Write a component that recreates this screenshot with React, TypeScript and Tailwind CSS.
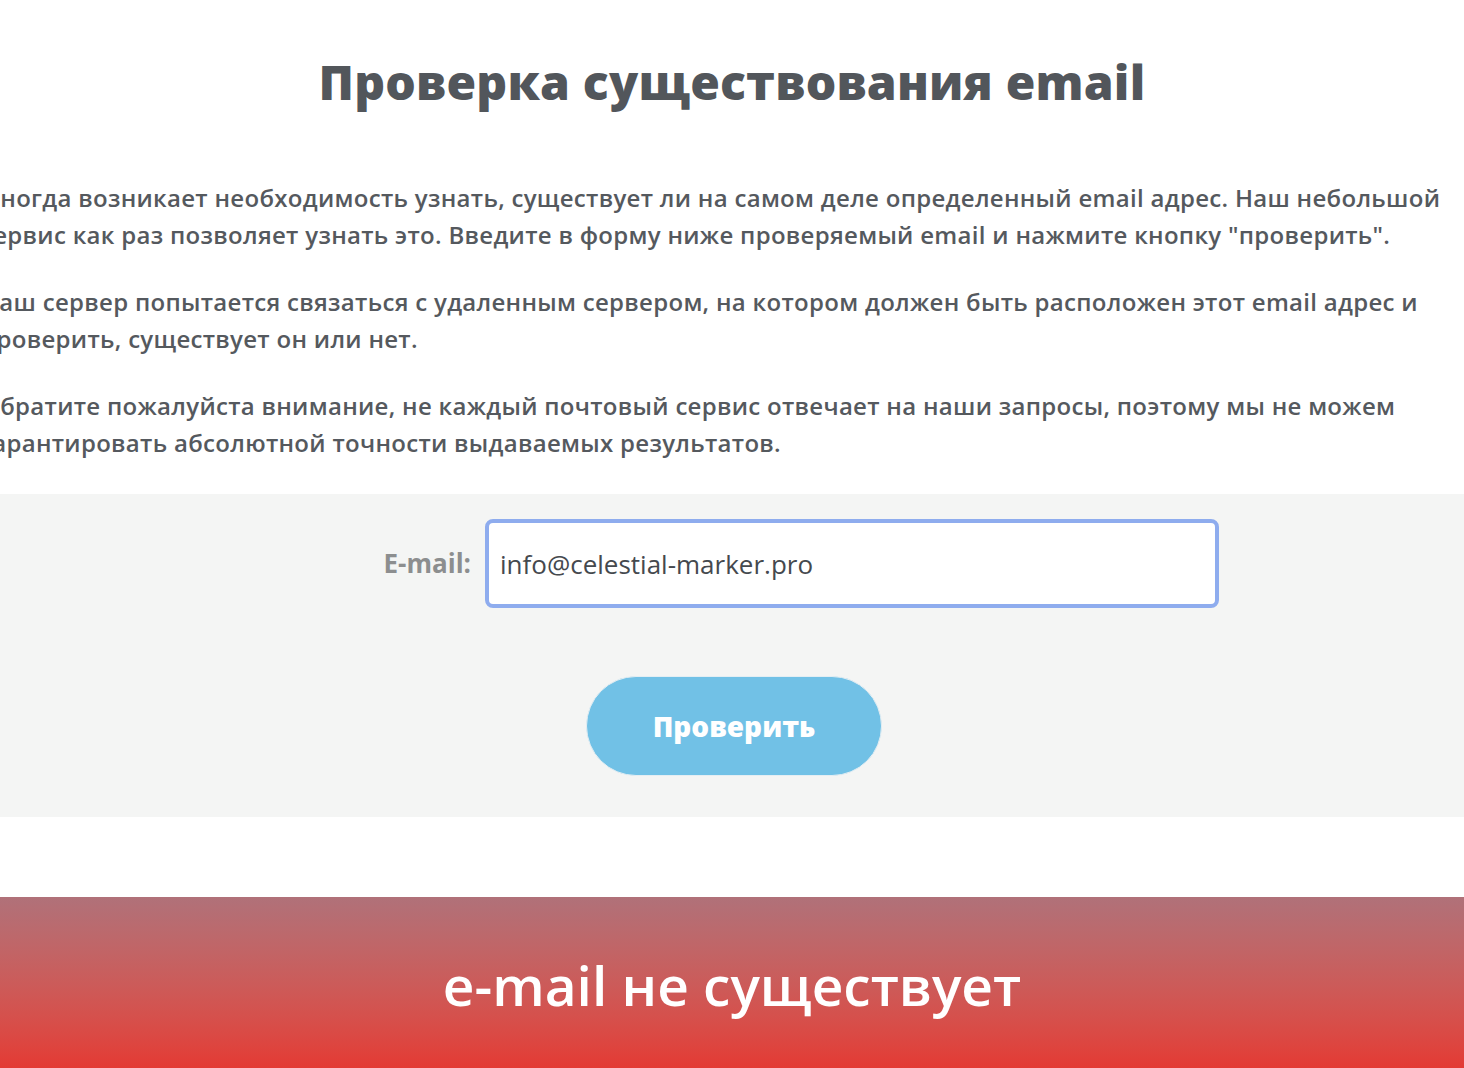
import { useState } from 'react';

export default function App() {
  const [email, setEmail] = useState('info@celestial-marker.pro');

  return (
    <div className="w-full min-h-[1068px] overflow-hidden bg-white font-['Open_Sans',sans-serif]">
      <h1 className="pt-[51px] text-center text-[48px] leading-[62px] font-extrabold text-[#52565b] tracking-[0.2px]">
        Проверка существования email
      </h1>

      <div className="mt-[66px] ml-[-19px] text-[24px] leading-[37px] font-semibold text-[#55595e] whitespace-nowrap tracking-[0.3px]">
        <p>
          Иногда возникает необходимость узнать, существует ли на самом деле определенный email адрес. Наш небольшой
          <br />
          сервис как раз позволяет узнать это. Введите в форму ниже проверяемый email и нажмите кнопку "проверить".
        </p>
        <p className="mt-[30px]">
          Наш сервер попытается связаться с удаленным сервером, на котором должен быть расположен этот email адрес и
          <br />
          проверить, существует он или нет.
        </p>
        <p className="mt-[30px]">
          Обратите пожалуйста внимание, не каждый почтовый сервис отвечает на наши запросы, поэтому мы не можем
          <br />
          гарантировать абсолютной точности выдаваемых результатов.
        </p>
      </div>

      <div className="mt-[33px] bg-[#f4f5f4] pt-[25px] pb-[41px]">
        <div className="flex items-center">
          <label className="w-[485px] pr-[14px] text-right text-[26px] font-bold text-[#8c8e8f]">E-mail:</label>
          <input
            value={email}
            onChange={(e) => setEmail(e.target.value)}
            className="w-[734px] h-[89px] rounded-[8px] border-4 border-[#8eacee] bg-white px-[11px] text-[26px] text-[#45494e] outline-none"
          />
        </div>
        <div className="mt-[68px] flex justify-center">
          <button
            type="button"
            className="ml-[4px] w-[296px] h-[100px] rounded-full border border-[#e4eef3] bg-[#71c1e6] text-[28px] font-extrabold text-white"
          >
            Проверить
          </button>
        </div>
      </div>

      <div className="mt-[80px] h-[180px] bg-gradient-to-b from-[#b07179] to-[#e6342e] pt-[56px] text-center">
        <p className="text-[55px] leading-[64px] font-semibold text-white">e-mail не существует</p>
      </div>
    </div>
  );
}
